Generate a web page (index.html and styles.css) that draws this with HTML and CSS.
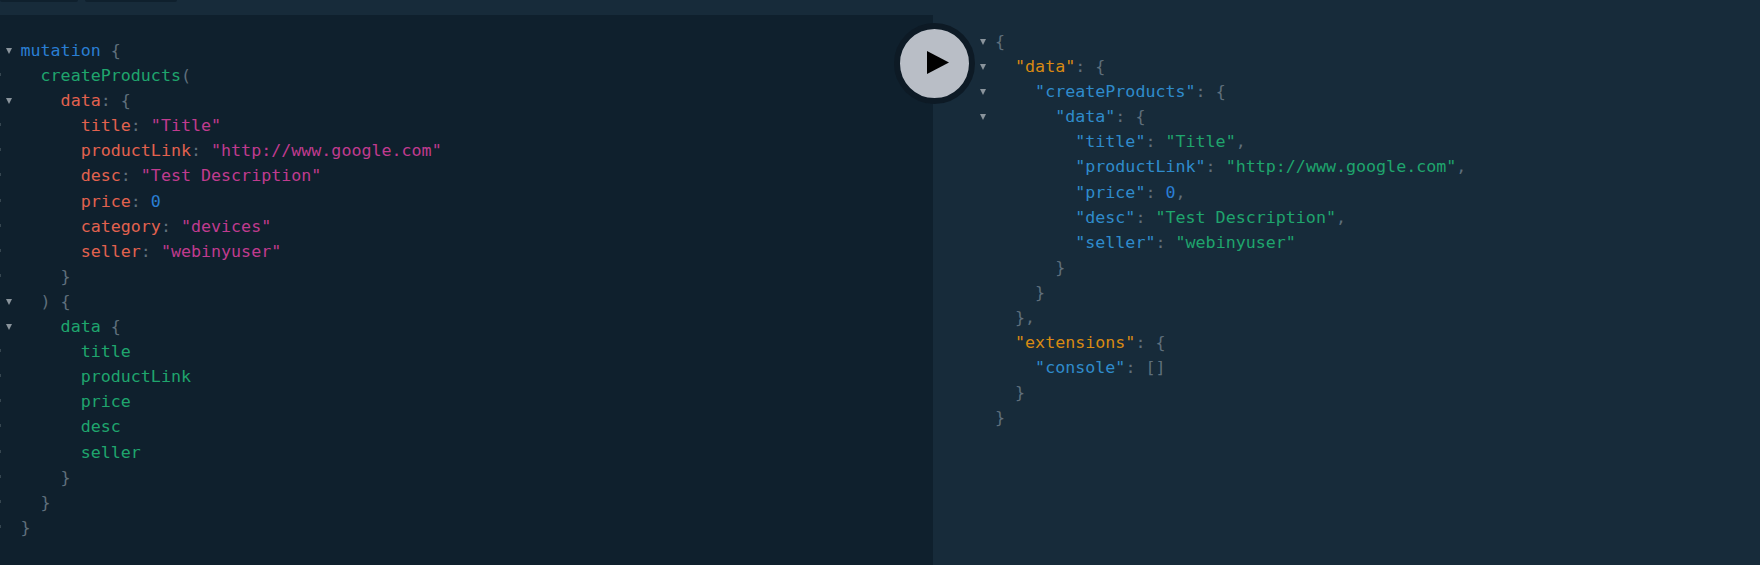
FILE: index.html
```html
<!DOCTYPE html>
<html lang="en">
<head>
<meta charset="utf-8">
<title>GraphQL Playground</title>
<link rel="stylesheet" href="styles.css">
</head>
<body>
<div class="tabs"><span class="tab tab-a"></span><span class="tab tab-b"></span></div>
<main class="panes">
  <section class="editor">
    <div class="code code-query">
      <div class="line"><i class="fold"></i><span class="kw">mutation</span> <span class="p">{</span></div>
      <div class="line in1"><span class="def">createProducts</span><span class="p">(</span></div>
      <div class="line in2"><i class="fold"></i><span class="arg">data</span><span class="p">:</span> <span class="p">{</span></div>
      <div class="line in3"><span class="arg">title</span><span class="p">:</span> <span class="str">"Title"</span></div>
      <div class="line in3"><span class="arg">productLink</span><span class="p">:</span> <span class="str">"http://www.google.com"</span></div>
      <div class="line in3"><span class="arg">desc</span><span class="p">:</span> <span class="str">"Test Description"</span></div>
      <div class="line in3"><span class="arg">price</span><span class="p">:</span> <span class="num">0</span></div>
      <div class="line in3"><span class="arg">category</span><span class="p">:</span> <span class="str">"devices"</span></div>
      <div class="line in3"><span class="arg">seller</span><span class="p">:</span> <span class="str">"webinyuser"</span></div>
      <div class="line in2"><span class="p">}</span></div>
      <div class="line in1"><i class="fold"></i><span class="p">) {</span></div>
      <div class="line in2"><i class="fold"></i><span class="def">data</span> <span class="p">{</span></div>
      <div class="line in3"><span class="def">title</span></div>
      <div class="line in3"><span class="def">productLink</span></div>
      <div class="line in3"><span class="def">price</span></div>
      <div class="line in3"><span class="def">desc</span></div>
      <div class="line in3"><span class="def">seller</span></div>
      <div class="line in2"><span class="p">}</span></div>
      <div class="line in1"><span class="p">}</span></div>
      <div class="line"><span class="p">}</span></div>
    </div>
  </section>
  <section class="result">
    <div class="code code-result">
      <div class="line"><i class="fold"></i><span class="p">{</span></div>
      <div class="line in1"><i class="fold"></i><span class="top">"data"</span><span class="p">:</span> <span class="p">{</span></div>
      <div class="line in2"><i class="fold"></i><span class="key">"createProducts"</span><span class="p">:</span> <span class="p">{</span></div>
      <div class="line in3"><i class="fold"></i><span class="key">"data"</span><span class="p">:</span> <span class="p">{</span></div>
      <div class="line in4"><span class="key">"title"</span><span class="p">:</span> <span class="val">"Title"</span><span class="p">,</span></div>
      <div class="line in4"><span class="key">"productLink"</span><span class="p">:</span> <span class="val">"http://www.google.com"</span><span class="p">,</span></div>
      <div class="line in4"><span class="key">"price"</span><span class="p">:</span> <span class="num">0</span><span class="p">,</span></div>
      <div class="line in4"><span class="key">"desc"</span><span class="p">:</span> <span class="val">"Test Description"</span><span class="p">,</span></div>
      <div class="line in4"><span class="key">"seller"</span><span class="p">:</span> <span class="val">"webinyuser"</span></div>
      <div class="line in3"><span class="p">}</span></div>
      <div class="line in2"><span class="p">}</span></div>
      <div class="line in1"><span class="p">},</span></div>
      <div class="line in1"><span class="top">"extensions"</span><span class="p">:</span> <span class="p">{</span></div>
      <div class="line in2"><span class="key">"console"</span><span class="p">:</span> <span class="p">[]</span></div>
      <div class="line in1"><span class="p">}</span></div>
      <div class="line"><span class="p">}</span></div>
    </div>
  </section>
  <button class="run" aria-label="Run query">
    <svg class="run-icon" width="22" height="23" viewBox="0 0 22 23"><path d="M0 0 L22 11.5 L0 23 Z"/></svg>
  </button>
</main>
</body>
</html>
```
FILE: styles.css
```css
* { box-sizing: border-box; }
html, body { margin: 0; height: 100%; }
body { background: #172b3a; overflow: hidden; display: flex; flex-direction: column; }
.tabs { height: 15px; flex: none; display: flex; gap: 7px; background: #172b3a; }
.tab { height: 2px; background: #0f202d; border-radius: 0 0 3px 3px; }
.tab-a { width: 78px; }
.tab-b { width: 92px; }
.panes { position: relative; flex: 1; display: flex; min-height: 0; }
.editor { width: 933px; flex: none; background: #0f202d; padding-top: 23px; }
.result { flex: 1; background: #172b3a; padding-top: 14px; }
.code {
  display: flex;
  flex-direction: column;
  font-family: "DejaVu Sans Mono", monospace;
  font-size: 16.67px;
}
.code-query { padding-left: 20.5px; }
.code-result { padding-left: 62px; }
.line { position: relative; height: 25.1px; line-height: 25.1px; white-space: pre; }
.in1 { padding-left: 2ch; }
.in2 { padding-left: 4ch; }
.in3 { padding-left: 6ch; }
.in4 { padding-left: 8ch; }
.code-query .line:not(:has(.fold))::before {
  content: "";
  position: absolute;
  left: -20.5px;
  top: 10px;
  width: 1px;
  height: 3px;
  background: #35454f;
}
.fold {
  position: absolute;
  left: -14.5px;
  top: 10px;
  width: 0;
  height: 0;
  border-left: 3.5px solid transparent;
  border-right: 3.5px solid transparent;
  border-top: 6px solid #8a949c;
}
.code-result .fold { left: -15px; }
.p { color: #5f6f7c; }
.kw { color: #2a7ed3; }
.def { color: #1fa56d; }
.arg { color: #e2624f; }
.str { color: #c03b8f; }
.num { color: #2a7ed3; }
.top { color: #d98a12; }
.key { color: #2f8bcc; }
.val { color: #1fa56d; }
.run {
  position: absolute;
  left: 894px;
  top: 8px;
  width: 81px;
  height: 81px;
  padding: 0;
  border: 6px solid #0d1a25;
  border-radius: 50%;
  background: #b9bec6;
  display: flex;
  align-items: center;
  justify-content: center;
}
.run-icon { fill: #000; margin: -2px 0 0 7px; }
```
